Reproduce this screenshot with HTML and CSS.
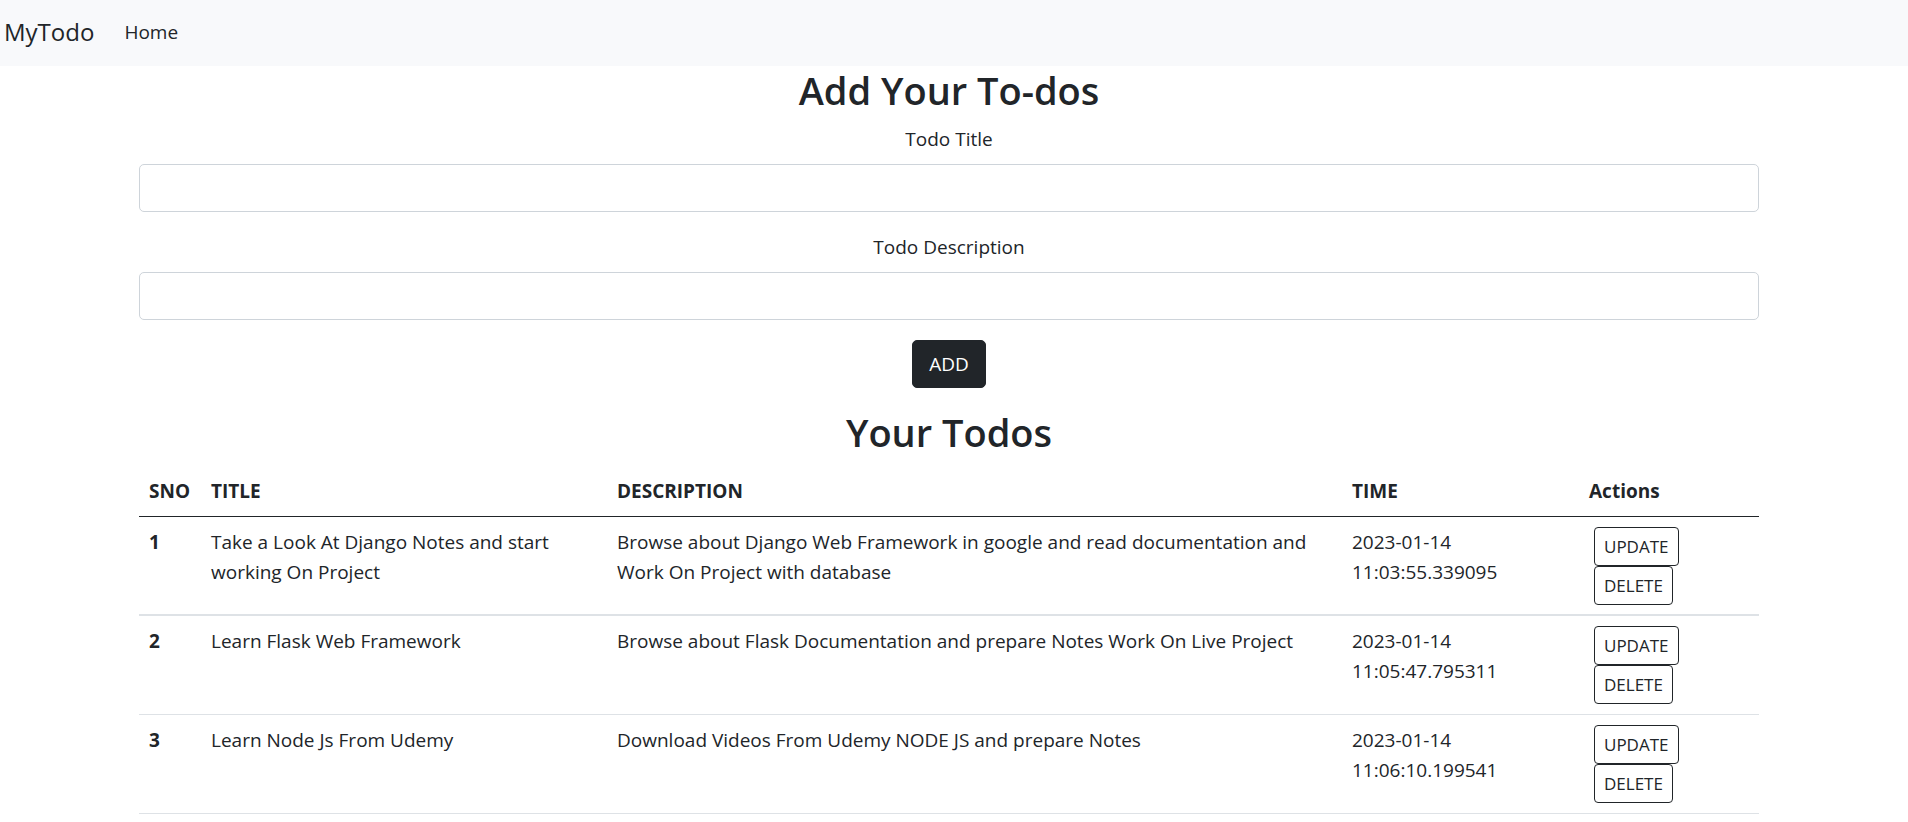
FILE: index.html
```html
<!DOCTYPE html>
<html lang="en">
<head>
<meta charset="utf-8">
<meta name="viewport" content="width=device-width, initial-scale=1">
<title>MyTodo</title>
<link rel="stylesheet" href="styles.css">
</head>
<body>
<nav class="navbar">
  <a class="brand" href="#">MyTodo</a>
  <a class="nav-link" href="#">Home</a>
</nav>
<main class="page">
  <div class="container">
    <h2 class="heading">Add Your To-dos</h2>
    <form class="todo-form">
      <div class="field">
        <label class="label" for="title">Todo Title</label>
        <input class="input" type="text" id="title" name="title">
      </div>
      <div class="field">
        <label class="label" for="desc">Todo Description</label>
        <input class="input" type="text" id="desc" name="desc">
      </div>
      <button class="add" type="submit">ADD</button>
    </form>
    <h2 class="heading">Your Todos</h2>
    <table class="todos">
      <colgroup>
        <col class="col-sno"><col class="col-title"><col class="col-desc"><col class="col-time"><col class="col-actions">
      </colgroup>
      <thead>
        <tr><th scope="col">SNO</th><th scope="col">TITLE</th><th scope="col">DESCRIPTION</th><th scope="col">TIME</th><th scope="col">Actions</th></tr>
      </thead>
      <tbody>
        <tr>
          <th scope="row">1</th>
          <td>Take a Look At Django Notes and start working On Project</td>
          <td>Browse about Django Web Framework in google and read documentation and Work On Project with database</td>
          <td>2023-01-14 11:03:55.339095</td>
          <td><div class="actions"><button class="action" type="button">UPDATE</button><button class="action" type="button">DELETE</button></div></td>
        </tr>
        <tr>
          <th scope="row">2</th>
          <td>Learn Flask Web Framework</td>
          <td>Browse about Flask Documentation and prepare Notes Work On Live Project</td>
          <td>2023-01-14 11:05:47.795311</td>
          <td><div class="actions"><button class="action" type="button">UPDATE</button><button class="action" type="button">DELETE</button></div></td>
        </tr>
        <tr>
          <th scope="row">3</th>
          <td>Learn Node Js From Udemy</td>
          <td>Download Videos From Udemy NODE JS and prepare Notes</td>
          <td>2023-01-14 11:06:10.199541</td>
          <td><div class="actions"><button class="action" type="button">UPDATE</button><button class="action" type="button">DELETE</button></div></td>
        </tr>
      </tbody>
    </table>
  </div>
</main>
</body>
</html>
```

FILE: styles.css
```css
*,
*::before,
*::after {
  box-sizing: border-box;
}

body {
  margin: 0;
  background: #fff;
  color: #212529;
  font-family: "Segoe UI", "Open Sans", "Noto Sans", sans-serif;
  font-size: 19px;
  line-height: 30px;
}

.navbar {
  display: flex;
  align-items: center;
  gap: 30px;
  min-height: 66px;
  padding: 8px 4px 10px;
  background: #f8f9fb;
}

.brand,
.nav-link {
  color: #212529;
  text-decoration: none;
}

.brand {
  font-size: 24px;
}

.page {
  padding: 0 25px 0 15px;
}

.container {
  max-width: 1620px;
  margin: 0 auto;
}

.heading {
  margin: 0 0 10px;
  font-size: 38px;
  font-weight: 600;
  line-height: 48px;
  text-align: center;
}

.todo-form {
  display: flex;
  flex-direction: column;
  align-items: center;
  gap: 20px;
  margin-bottom: 20px;
}

.field {
  display: flex;
  flex-direction: column;
  gap: 10px;
  width: 100%;
  text-align: center;
}

.input {
  width: 100%;
  height: 48px;
  padding: 8px 15px;
  border: 1px solid #ced4da;
  border-radius: 5px;
  background: #fff;
  color: inherit;
  font: inherit;
}

.add {
  padding: 8px 16px;
  border: 1px solid #212529;
  border-radius: 5px;
  background: #212529;
  color: #fff;
  font: inherit;
}

.todos {
  width: 100%;
  border-collapse: collapse;
  table-layout: fixed;
}

.col-sno {
  width: 62px;
}

.col-title {
  width: 406px;
}

.col-time {
  width: 237px;
}

.col-actions {
  width: 180px;
}

.todos th,
.todos td {
  padding: 10px;
  border-bottom: 1px solid #dee2e6;
  text-align: left;
  vertical-align: top;
}

.todos th {
  font-weight: 700;
}

.todos thead th {
  border-bottom-color: #212529;
}

.todos tbody tr:first-child > * {
  padding-bottom: 9px;
  border-bottom-width: 2px;
}

.actions {
  display: flex;
  flex-direction: column;
  align-items: flex-start;
  padding-left: 5px;
}

.action {
  padding: 5px 9px;
  border: 1px solid #212529;
  border-radius: 4px;
  background: #fff;
  color: #212529;
  font-family: inherit;
  font-size: 17px;
  line-height: 27px;
}
```
